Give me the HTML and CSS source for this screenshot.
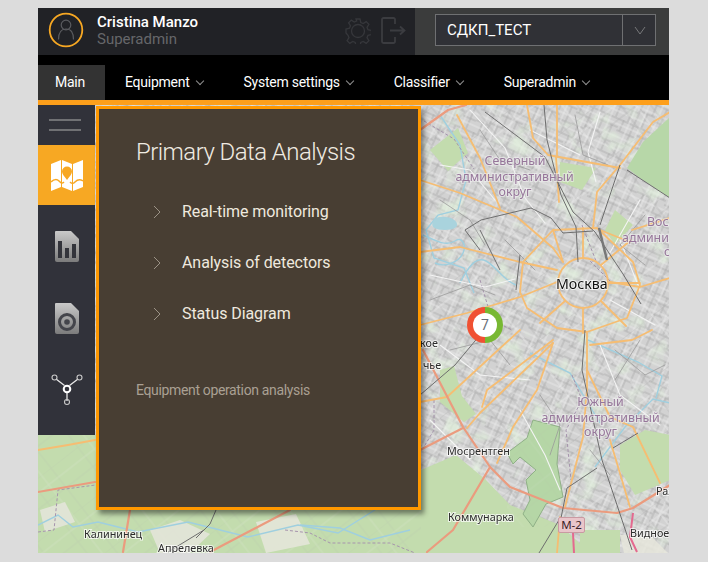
FILE: index.html
```html
<!DOCTYPE html>
<html lang="en">
<head>
<meta charset="utf-8">
<title>Primary Data Analysis</title>
<link rel="stylesheet" href="styles.css">
</head>
<body>
<div class="app">
  <header class="top">
    <div class="user">
      <div class="avatar">
        <svg width="36" height="36" viewBox="0 0 36 36" fill="none">
          <circle cx="18" cy="18" r="16.300" stroke="#f7a823" stroke-width="1.800"/>
          <circle cx="18" cy="13" r="4.800" stroke="#5a5b5f" stroke-width="1.200"/>
          <path d="M10.500 27.500c0-7 2.500-10.500 7.500-10.500s7.500 3.500 7.500 10.500" stroke="#5a5b5f" stroke-width="1.200"/>
        </svg>
      </div>
      <div class="who">
        <div class="name">Cristina Manzo</div>
        <div class="role">Superadmin</div>
      </div>
      <div class="tools">
        <svg width="26" height="26" viewBox="0 0 26 26" fill="none" stroke="#36373b" stroke-width="1.300">
          <circle cx="13" cy="13" r="6.500"/>
          <path d="M11 1h4l.8 3.500 2.400 1 3-1.900 2.700 2.700-1.900 3 1 2.400 3.500.8v4l-3.500.8-1 2.400 1.900 3-2.700 2.700-3-1.900-2.400 1-.8 3.500h-4l-.8-3.500-2.400-1-3 1.900-2.700-2.700 1.900-3-1-2.400L1 15v-4l3.500-.8 1-2.400-1.900-3 2.700-2.700 3 1.900 2.400-1z"/>
        </svg>
        <svg width="25" height="27" viewBox="0 0 25 27" fill="none" stroke="#3b3c40" stroke-width="1.800">
          <path d="M14 7V2.500a1.500 1.500 0 0 0-1.500-1.500h-10A1.500 1.500 0 0 0 1 2.500v22A1.500 1.500 0 0 0 2.500 26h10a1.500 1.500 0 0 0 1.500-1.500V20"/>
          <path d="M9 13.500h14M19 9.500l4.500 4-4.500 4"/>
        </svg>
      </div>
    </div>
    <div class="project">
      <div class="select">
        <span class="select-text">СДКП_ТЕСТ</span>
        <span class="select-btn">
          <svg width="12" height="9" viewBox="0 0 12 9" fill="none" stroke="#77787a" stroke-width="1"><path d="M1 1l5 7 5-7"/></svg>
        </span>
      </div>
    </div>
  </header>
  <nav class="menu">
    <a class="item current">Main</a>
    <a class="item">Equipment<i class="caret"></i></a>
    <a class="item">System settings<i class="caret"></i></a>
    <a class="item">Classifier<i class="caret"></i></a>
    <a class="item">Superadmin<i class="caret"></i></a>
  </nav>
  <main class="stage">
    <svg class="map" viewBox="38 105 631 448" preserveAspectRatio="none" aria-hidden="true">
      <defs>
        <pattern id="st1" width="44" height="36" patternUnits="userSpaceOnUse" patternTransform="rotate(24)">
          <path d="M0 1H44M0 12H20M20 9H44M0 24H13M13 21H30M30 25H44M3 0V12M14 1V36M27 1V21M38 9V36M7 24V36M22 21V36" stroke="#a9a9a9" stroke-width=".8" fill="none"/>
          <path d="M0 6H44M0 18H44M0 30H44M9 0V36M20 0V36M33 0V36" stroke="#ebebeb" stroke-width=".8" fill="none"/>
        </pattern>
        <pattern id="st2" width="58" height="50" patternUnits="userSpaceOnUse" patternTransform="rotate(-38)">
          <path d="M0 0H58M0 25H58M18 0V50M42 0V50" stroke="#adadad" stroke-width=".7" fill="none"/>
          <path d="M0 12H58M30 0V50" stroke="#ececec" stroke-width=".9" fill="none"/>
        </pattern>
        <filter id="patch" x="0" y="0" width="100%" height="100%">
          <feTurbulence type="fractalNoise" baseFrequency=".045" numOctaves="3" seed="21"/>
          <feColorMatrix values="0 0 0 0 .76  0 0 0 0 .89  0 0 0 0 .72  0 4 0 0 -2.250"/>
        </filter>
      </defs>
      <rect x="38" y="105" width="631" height="448" fill="#d2d2d2"/>
      <rect x="38" y="105" width="631" height="448" fill="url(#st1)"/>
      <rect x="420" y="105" width="250" height="448" fill="url(#st2)" opacity=".8"/>
      <rect x="38" y="105" width="631" height="448" filter="url(#patch)" opacity=".7"/>

      <g fill="#c3dcae">
        <path d="M38 435H421V553H38z"/>
        <path d="M421 470l35-15 30 25 24 25 50 20 30 28H421z"/>
        <path d="M627 168l16-26 27-25v81l-30-20z" fill="#b7d7a8"/>
        <path d="M507 453l20-15 6-18 27 7-3 37 6 33-17 7-13 23-10-13 7-14-4-20 10-10-16-13-7 7z" fill="#b5d6a6" stroke="#8fb086" stroke-width="1"/>
        <path d="M620 445l25-15 25 5v45l-35 15-15-25z"/>
        <path d="M440 370l14-4 8 30 14 18-12 8-24-20z"/>
        <path d="M430 150l28-22 10 25-20 18z"/>
        <path d="M560 162l36 6-14 22-22-8z"/>
        <path d="M615 210l18 15-18 20-10-15z"/>
        <path d="M580 530h40v23h-40z"/>
      </g>
      <rect x="38" y="435" width="383" height="118" fill="url(#st2)" opacity=".25"/>
      <rect x="507" y="420" width="60" height="107" fill="url(#st2)" opacity=".12"/>
      <g fill="#e6e6dc" opacity=".85">
        <path d="M104 492l30-6 8 20h-36z"/>
        <path d="M150 530l30-10 30 14-20 19h-30z"/>
        <path d="M256 522l40-8 14 30-44 9z"/>
        <path d="M620 535l30 0 18 18h-44z"/>
        <path d="M40 510l25-8 10 20-30 10z"/>
      </g>

      <g fill="none" stroke="#9fcfdf" stroke-width="1.400">
        <path d="M440 115l20 30 6 35-8 30-20 5-12 15 8 28 30 10 10 25"/>
        <path d="M423 235c12 5 22 12 32 6 6-5 12 3 8 12s-18 15-28 10"/>
        <path d="M460 283c8-16 16-27 26-22s18 20 30 24"/>
        <path d="M588 340l50 22 24 14-6 22"/>
        <path d="M595 467l30-40 28-28 17 4"/>
        <path d="M530 353l40 20 30 50"/>
        <path d="M38 525l20-10 15 12 25-5 40 10 50-10 60 15 50-12 40 8 40-25"/>
        <path d="M300 525l40 3 30 12 40-10"/>
      </g>
      <path d="M436 218c8-3 20 0 21 6s-12 7-20 5-4-9-1-11z" fill="#a9d3dd"/>

      <g fill="none" stroke="#a694ad" stroke-width="1" stroke-dasharray="3 2">
        <path d="M424 121l30 18 20 30"/>
        <path d="M582 225l14 36-6 0 20 20"/>
        <path d="M434 400v30l-12 20"/>
        <path d="M572 375l10 25-16 30 5 50"/>
        <path d="M38 532l16-2 4-40 60-8 50-15h200"/>
        <path d="M285 530l25 3 20 10h60l25 10"/>
        <path d="M480 280l12 40 20 10"/>
      </g>

      <g fill="none" stroke="#f4f4f4" stroke-width="1.100" stroke-linecap="round">
        <path d="M470 110l35 38 20 50 20 25M600 112l-12 40 8 30M640 200l-40 70M430 275l55 12 30-8M440 345l40 30 50 5M600 345l20 50 40 30M520 410l25 45 15 35M430 420l40 40M610 300l45 25M530 130l50 25M440 165l30 5 25 30M620 240l20 50"/>
      </g>
      <g fill="none" stroke="#9a9a9a" stroke-width=".8" stroke-linecap="round">
        <path d="M480 130l20 30 30 10M575 115l8 40 25 10M645 215l-25 30 25 20M430 300l40-15 25 10M450 350l40-10 20 25M615 350l30 25 20-10M540 395l20 30-10 30M590 450l20 25M440 200l30 20 15 25M505 240l30 30M640 340l-25 40"/>
      </g>

      <g fill="none" stroke="#f6bd72" stroke-width="1.800" stroke-linecap="round" stroke-linejoin="round">
        <path d="M527 105l6 33 15 17 72 13"/>
        <path d="M557 105v52M556 157l3 45"/>
        <path d="M457 115l23 43 20 50"/>
        <path d="M420 180l40 13 57 24 36 31 10 14"/>
        <path d="M520 292l3-30 30-32 44-2 36 34 7 23-13 33-40 14-30-4-30-20z"/>
        <path d="M420 252l40-5 60 15 37 8"/>
        <path d="M420 325l47-12 53-16 37-15"/>
        <path d="M670 112l-17 10-33 43-23 27-4 36"/>
        <path d="M670 278l-30 9-30-5"/>
        <path d="M600 230l30 12M632 230l38-12M553 230l10 32"/>
        <circle cx="583" cy="283" r="25"/>
        <path d="M583 258v-30M583 308v25M608 283h32M601 265l30-25M565 301l-25 22M601 301l25 25"/>
        <path d="M553 340l-66 50-5 17"/>
        <path d="M520 330l-73 67-27 5"/>
        <path d="M553 343l-73 70-13 15"/>
        <path d="M553 343l-16 47-24 37-16 36"/>
        <path d="M587 333v57l-4 47-18 70"/>
        <path d="M587 370l23 47 23 10 27 56"/>
        <path d="M610 440l20 67"/>
        <path d="M560 517l-3 36"/>
        <path d="M38 450l30-5 27-5"/>
        <path d="M590 345l42-5 20-10"/>
      </g>

      <g fill="none" stroke="#eb9b7e" stroke-width="2.200" stroke-linecap="round" stroke-linejoin="round">
        <path d="M423 350l40 77 27 40 20 20 53 21 54 5 16-5 37-23"/>
        <path d="M490 467l-37 63-26 22"/>
        <path d="M463 428l-43 22"/>
        <path d="M38 492l57-10"/>
        <path d="M210 552l80-42"/>
        <path d="M130 510l-7 42"/>
        <path d="M420 130l28-20 18-5"/>
      </g>
      <g fill="none" stroke="#e4698f" stroke-width="2">
        <path d="M633 513l-3 24 7 15"/>
        <path d="M573 533l1 20"/>
      </g>

      <g fill="none" stroke="#6e6e6e" stroke-width="1" stroke-linejoin="round">
        <path d="M544 105l3 35 14 55 15 32 2 35"/>
        <path d="M485 112l60 45 28 55 22 20 28 42 18 30"/>
        <path d="M627 170l43 28M620 165l-20 60"/>
        <path d="M480 250l-15-20 16-10 50-12 20 10 12 15 30-2"/>
        <path d="M500 270l-20-40M516 290l4-35"/>
        <path d="M420 395l35-30 25-30"/>
        <path d="M585 330l-3 40 20 90 30 90M597 468l-30 20-8 40"/>
        <path d="M559 520l-20 33M204 530l-36 22"/>
        <path d="M216 510l-6 14-14 14"/>
        <path d="M613 448l25-15"/>
      </g>
      <path d="M599 228l8 32" stroke="#777" stroke-width="2.500" fill="none"/>

      <g class="lbl-admin">
        <text x="515" y="165" text-anchor="middle">Северный</text>
        <text x="514.500" y="181" text-anchor="middle">административный</text>
        <text x="515" y="196" text-anchor="middle">округ</text>
        <text x="600.500" y="406" text-anchor="middle">Южный</text>
        <text x="600.500" y="422" text-anchor="middle">административный</text>
        <text x="600.500" y="436" text-anchor="middle">округ</text>
        <text x="647" y="226">Вос</text>
        <text x="622" y="242">админи</text>
        <text x="664" y="256">о</text>
      </g>
      <text class="lbl-city" x="556" y="289">Москва</text>
      <g class="lbl-town">
        <text x="447" y="455">Мосрентген</text>
        <text x="448" y="521">Коммунарка</text>
        <text x="84" y="538">Калининец</text>
        <text x="158" y="552">Апрелевка</text>
        <text x="630" y="537">Видное</text>
        <text x="656" y="495">Раз</text>
        <text x="420" y="347">кое</text>
        <text x="423" y="369">чье</text>
      </g>
    </svg>

    <div class="shield">М-2</div>
    <div class="cluster"><span class="cluster-num">7</span></div>

    <aside class="side">
      <div class="burger"><i></i><i></i></div>
      <div class="side-btn active">
        <svg width="32" height="31" viewBox="0 0 32 31">
          <path d="M0 4l10-4v27L0 31zM11 0l10 4v27l-10-4zM22 4l10-4v27l-10 4z" fill="#fff"/>
          <path d="M16 20c-3-4-5-6-5-8.500a5 5 0 0 1 10 0C21 14 19 16 16 20z" fill="#f7a823"/>
          <path d="M0 22c3-3 6-3 8-1s3 3 5 1M19 22c2 2 3 2 5 0s5-3 8-1" fill="none" stroke="#f7a823" stroke-width="1.500"/>
        </svg>
      </div>
      <div class="side-btn">
        <svg width="24" height="31" viewBox="0 0 24 31">
          <defs><linearGradient id="dg" x1="0" y1="0" x2="0" y2="1"><stop offset="0" stop-color="#c9c9c9"/><stop offset="1" stop-color="#7c7c7c"/></linearGradient></defs>
          <path d="M1 0h15l8 8v21a2 2 0 0 1-2 2H2a2 2 0 0 1-2-2V1a1 1 0 0 1 1-1z" fill="url(#dg)"/>
          <path d="M3 10h4v17H3zM10 17h4v10h-4zM17 13h4v14h-4z" fill="#33343b"/>
        </svg>
      </div>
      <div class="side-btn">
        <svg width="24" height="31" viewBox="0 0 24 31">
          <defs><linearGradient id="dg2" x1="0" y1="0" x2="0" y2="1"><stop offset="0" stop-color="#c9c9c9"/><stop offset="1" stop-color="#7c7c7c"/></linearGradient></defs>
          <path d="M1 0h15l8 8v21a2 2 0 0 1-2 2H2a2 2 0 0 1-2-2V1a1 1 0 0 1 1-1z" fill="url(#dg2)"/>
          <circle cx="12" cy="19" r="7.500" fill="none" stroke="#44454b" stroke-width="3"/>
          <circle cx="12" cy="19" r="2.800" fill="#44454b"/>
        </svg>
      </div>
      <div class="side-btn">
        <svg width="32" height="33" viewBox="0 0 32 33" fill="none" stroke="#c9c9c9">
          <path d="M5 5l8.500 6.500M27 5l-8.500 6.500M16 18v9" stroke="#e8e8e8" stroke-width="1.300"/>
          <circle cx="3.500" cy="3.500" r="2.500" stroke-width="1.100"/>
          <circle cx="28.500" cy="3.500" r="2.500" stroke-width="1.100"/>
          <circle cx="16" cy="28" r="2.500" stroke-width="1.100"/>
          <circle cx="16" cy="15" r="3.300" stroke="#fff" stroke-width="2"/>
        </svg>
      </div>
    </aside>

    <section class="panel">
      <h1 class="panel-title">Primary Data Analysis</h1>
      <ul class="links">
        <li class="link"><svg class="chev" width="8" height="14" viewBox="0 0 8 14" fill="none" stroke="#9b9286" stroke-width="1"><path d="M1 1l6 6-6 6"/></svg>Real-time monitoring</li>
        <li class="link"><svg class="chev" width="8" height="14" viewBox="0 0 8 14" fill="none" stroke="#9b9286" stroke-width="1"><path d="M1 1l6 6-6 6"/></svg>Analysis of detectors</li>
        <li class="link"><svg class="chev" width="8" height="14" viewBox="0 0 8 14" fill="none" stroke="#9b9286" stroke-width="1"><path d="M1 1l6 6-6 6"/></svg>Status Diagram</li>
      </ul>
      <p class="panel-note">Equipment operation analysis</p>
    </section>
  </main>
</div>
</body>
</html>
```

FILE: styles.css
```css
* { box-sizing: border-box; }
html, body { height: 100%; }
body {
  margin: 0;
  padding: 8px 39px 9px 38px;
  background: #dcdcdc;
  font-family: Roboto, "Liberation Sans", sans-serif;
  overflow: hidden;
}
.app { width: 631px; height: 545px; display: flex; flex-direction: column; }

.top { height: 47px; display: flex; flex: none; }
.user { width: 377px; background: #212226; display: flex; align-items: center; padding-left: 10px; }
.avatar { width: 36px; height: 36px; margin: -3px 13px 0 0; flex: none; }
.avatar svg { display: block; }
.who { width: 248px; flex: none; }
.name { color: #fff; font-size: 15px; font-weight: 500; line-height: 17px; margin-top: -2px; }
.role { color: #66676a; font-size: 15px; line-height: 17px; }
.tools { display: flex; align-items: center; gap: 10px; margin-top: -2px; }
.tools svg { display: block; flex: none; }
.project { flex: 1; background: #3b3c3c; padding: 6px 13px 0 20px; }
.select { height: 32px; border: 1px solid #6f7072; background: #303136; display: flex; }
.select-text { flex: 1; color: #fff; font-size: 15px; line-height: 30px; padding-left: 11px; }
.select-btn { width: 34px; border-left: 1px solid #6f7072; margin-right: -1px; display: flex; align-items: center; justify-content: center; }

.menu { height: 45px; flex: none; background: #000; padding-top: 10px; display: flex; }
.item { color: #fff; font-size: 14px; letter-spacing: -.25px; line-height: 35px; padding-right: 40px; display: block; white-space: nowrap; }
.item:nth-child(2) { padding-left: 20px; }
.item.current { width: 67px; background: #333; padding: 0 3px 0 0; text-align: center; }
.caret {
  display: inline-block; width: 6px; height: 6px; margin: 0 1px 3px 7px;
  border-right: 1px solid #8f8f8f; border-bottom: 1px solid #8f8f8f; transform: rotate(45deg);
}

.stage {
  position: relative; flex: 1; display: flex; align-items: flex-start;
  border-top: 5px solid #fd9f1b; overflow: hidden; background: #d8d8d8;
}
.map { position: absolute; left: 0; top: 0; width: 631px; height: 448px; display: block; filter: blur(.4px); }
.lbl-admin text { font: 12.400px "Noto Sans", sans-serif; fill: #96769a; paint-order: stroke; stroke: rgba(240,240,240,.6); stroke-width: 2px; }
.lbl-city { font: 14.200px "Noto Sans", sans-serif; fill: #111; paint-order: stroke; stroke: rgba(255,255,255,.7); stroke-width: 2px; }
.lbl-town text { font: 10.800px "Noto Sans", sans-serif; fill: #2c2c2c; paint-order: stroke; stroke: rgba(255,255,255,.7); stroke-width: 2px; }

.shield {
  position: absolute; left: 520px; top: 412px; width: 27px; height: 16px;
  background: #e9c5ca; border: 1px solid #c99aa2; border-radius: 2px;
  color: #3a2228; font: 11.500px/14px "Noto Sans", sans-serif; text-align: center;
}
.cluster {
  position: absolute; left: 429px; top: 202px; width: 36px; height: 36px; border-radius: 50%;
  background: linear-gradient(90deg, #f05133 50%, #78b833 50%);
  display: flex; align-items: center; justify-content: center;
}
.cluster-num {
  width: 24px; height: 24px; border-radius: 50%; background: #fff; color: #6a6f78;
  font-size: 14px; line-height: 24px; text-align: center;
}

.side { position: relative; width: 57px; height: 330px; flex: none; background: #31323a; }
.burger { height: 40px; padding: 14px 11px 0 11px; }
.burger i { display: block; width: 32px; height: 2px; background: #707174; margin-bottom: 8px; }
.side-btn { height: 72px; padding-top: 10px; display: flex; align-items: center; justify-content: center; }
.side-btn svg { display: block; }
.side-btn.active { height: 60px; padding-top: 0; background: #f7a823; }

.panel {
  position: relative; width: 325px; height: 404px; margin: 1px 0 0 1px; flex: none;
  background: #483e33; border: 3px solid #ff9800; box-shadow: 3px 4px 5px rgba(0,0,0,.45);
  padding: 28px 0 0 37px; color: #efe9df;
}
.panel-title { margin: 0 0 29px; font-size: 24px; font-weight: 300; letter-spacing: -.55px; line-height: 30px; color: #f0ebe2; }
.links { list-style: none; margin: 0; padding: 0 0 0 17px; }
.link { height: 51px; line-height: 22px; font-size: 16px; letter-spacing: -.07px; display: flex; align-items: flex-start; padding-top: 5px; }
.chev { margin: 4px 21px 0 0; flex: none; }
.panel-note { margin: 32px 0 0; font-size: 14px; letter-spacing: -.35px; line-height: 18px; color: #aaa093; }
```
